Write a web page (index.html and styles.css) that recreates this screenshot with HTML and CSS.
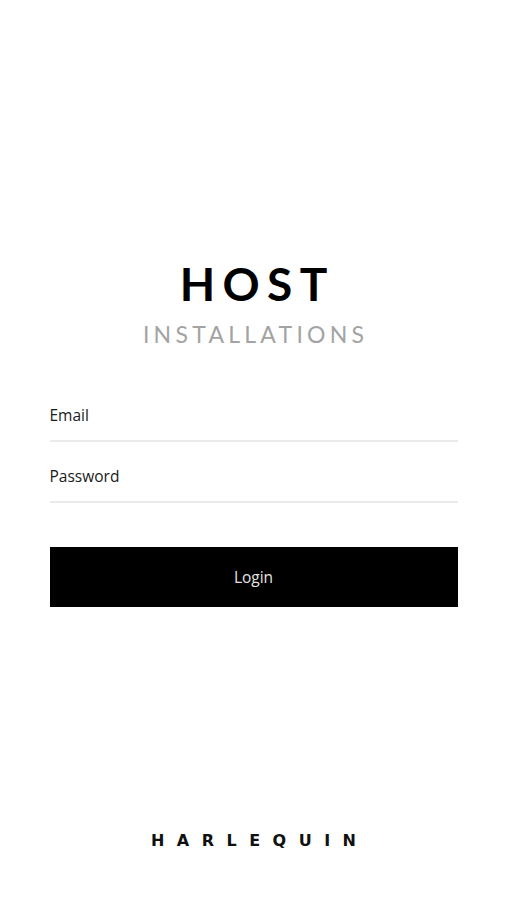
FILE: index.html
```html
<html>
  <head>
    <title>Host Installations</title>
    <meta content="text/html;charset=utf-8" http-equiv="Content-Type">
    <link rel="stylesheet" href="styles.css">
  </head>
  <body>
    <div class="screen">
      <div class="brand">
        <h1>HOST</h1>
        <p>INSTALLATIONS</p>
      </div>
      <form class="login">
        <label class="field">
          <input type="email" placeholder="Email">
        </label>
        <label class="field">
          <input type="password" placeholder="Password">
        </label>
        <button type="button">Login</button>
      </form>
      <div class="footer">HARLEQUIN</div>
    </div>
  </body>
</html>
```

FILE: styles.css
```css
* {
  box-sizing: border-box;
}
body {
  margin: 0;
  background: #fff;
}
.screen {
  height: 900px;
  display: flex;
  flex-direction: column;
  align-items: center;
  font-family: "Open Sans", "Noto Sans", sans-serif;
}
.brand {
  margin-top: 258px;
  text-align: center;
}
.brand h1 {
  margin: 0;
  font-family: Lato, "DejaVu Sans", sans-serif;
  font-weight: 700;
  font-size: 46px;
  line-height: 52px;
  letter-spacing: 0.16em;
  margin-right: -0.16em;
  color: #000;
}
.brand p {
  margin: 9px -0.185em 0 0;
  font-family: Lato, "DejaVu Sans", sans-serif;
  font-size: 23px;
  line-height: 30px;
  letter-spacing: 0.185em;
  color: #a3a3a3;
}
.login {
  width: 408px;
  margin-top: 41px;
  display: flex;
  flex-direction: column;
}
.field {
  display: block;
  border-bottom: 2px solid #ebebeb;
}
.field + .field {
  margin-top: 9px;
}
.field input {
  width: 100%;
  border: 0;
  outline: 0;
  padding: 0;
  height: 50px;
  font-family: "Open Sans", "Noto Sans", sans-serif;
  font-size: 15.5px;
  color: #111;
  background: transparent;
}
.field input::placeholder {
  color: #1a1a1a;
}
.login button {
  margin-top: 44px;
  height: 60px;
  border: 0;
  background: #000;
  color: #e4e4e4;
  font-family: "Open Sans", "Noto Sans", sans-serif;
  font-size: 15.5px;
}
.footer {
  margin-top: auto;
  margin-bottom: 50px;
  font-family: "DejaVu Sans", sans-serif;
  font-weight: 700;
  font-size: 16px;
  letter-spacing: 0.78em;
  margin-right: -0.78em;
  color: #111;
}
```
